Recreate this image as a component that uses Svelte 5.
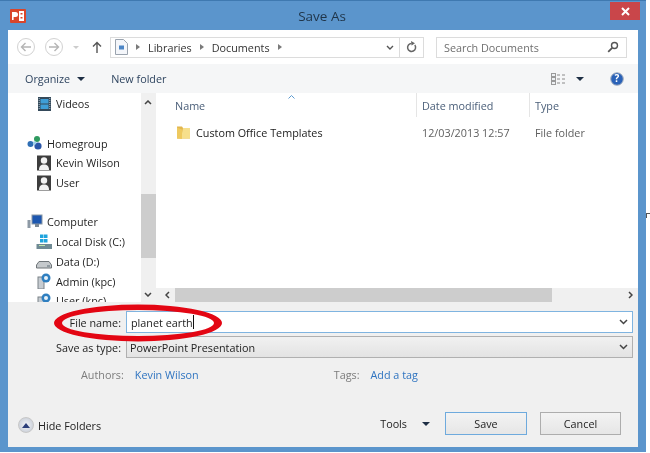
<script>
  const nav_groups = [
    { icon: 'video', label: 'Videos', child: true },
    { gap: true },
    { icon: 'homegroup', label: 'Homegroup' },
    { icon: 'user', label: 'Kevin Wilson', child: true },
    { icon: 'user', label: 'User', child: true },
    { gap: true },
    { icon: 'computer', label: 'Computer' },
    { icon: 'localdisk', label: 'Local Disk (C:)', child: true },
    { icon: 'disk', label: 'Data (D:)', child: true },
    { icon: 'netdrive', label: 'Admin (kpc)', child: true },
    { icon: 'netdrive', label: 'User (kpc)', child: true }
  ]
</script>

<div class="page">
  <div class="window">
    <div class="titlebar">
      <svg class="app-icon" width="16" height="14" viewBox="0 0 16 14">
        <rect width="16" height="14" rx="1" fill="#d9452a" />
        <rect x="9" y="2" width="5" height="10" fill="#fff" />
        <rect x="10.5" y="4" width="2" height="1.5" fill="#d9452a" />
        <rect x="10.5" y="8" width="2" height="1.5" fill="#d9452a" />
        <path d="M2 11V3h3.5a2 2 0 0 1 0 5H3.6v3z" fill="#fff" />
      </svg>
      <span class="title">Save As</span>
      <button class="close">
        <svg width="9" height="9" viewBox="0 0 9 9"><path d="M1 1l7 7M8 1L1 8" stroke="#fff" stroke-width="2" /></svg>
      </button>
    </div>

    <div class="client">
      <div class="navbar">
        <span class="round">
          <svg width="12" height="10" viewBox="0 0 12 10"><path d="M11 5H2M5.5 1L1.500 5l4 4" fill="none" stroke="#b5b5b5" stroke-width="1.400" /></svg>
        </span>
        <span class="round">
          <svg width="12" height="10" viewBox="0 0 12 10"><path d="M1 5h9M6.500 1l4 4-4 4" fill="none" stroke="#b5b5b5" stroke-width="1.400" /></svg>
        </span>
        <span class="tri-down light"></span>
        <svg class="up" width="10" height="12" viewBox="0 0 10 12"><path d="M5 12V2M1 5.500L5 1.500l4 4" fill="none" stroke="#555" stroke-width="1.400" /></svg>
        <div class="address">
          <svg class="lib" width="13" height="16" viewBox="0 0 13 16">
            <path d="M.5.5h8l4 4v11H.5z" fill="#f4f6fa" stroke="#9aa3ae" />
            <rect x="4" y="6.500" width="5" height="4" fill="#4d86c6" />
          </svg>
          <span class="tri-right"></span>
          <span class="crumb">Libraries</span>
          <span class="tri-right"></span>
          <span class="crumb">Documents</span>
          <span class="tri-right"></span>
          <span class="address-end">
            <svg class="chev" width="8" height="5" viewBox="0 0 8 5"><path d="M1 1l3 3 3-3" fill="none" stroke="#555" stroke-width="1.400" /></svg>
            <span class="refresh">
              <svg width="11" height="12" viewBox="0 0 11 12"><path d="M8.800 4A4 4 0 1 1 5.500 2.400" fill="none" stroke="#666" stroke-width="1.500" /><path d="M5 0l4 2.200L5.600 4.600z" fill="#666" /></svg>
            </span>
          </span>
        </div>
        <div class="search">
          <span>Search Documents</span>
          <svg width="12" height="12" viewBox="0 0 12 12"><circle cx="7.500" cy="4.500" r="3" fill="none" stroke="#555" stroke-width="1.400" /><path d="M5.200 6.800L1.200 10.800" stroke="#555" stroke-width="1.800" /></svg>
        </div>
      </div>

      <div class="toolbar">
        <span class="tool">Organize</span>
        <span class="tri-down dark"></span>
        <span class="tool new-folder">New folder</span>
        <span class="toolbar-end">
          <svg width="15" height="12" viewBox="0 0 15 12">
            <rect x=".5" y=".5" width="4" height="3" fill="#eef1f4" stroke="#9a9a9a" />
            <rect x=".5" y="4.500" width="4" height="3" fill="#eef1f4" stroke="#9a9a9a" />
            <rect x=".5" y="8.500" width="4" height="3" fill="#eef1f4" stroke="#9a9a9a" />
            <path d="M6 2h3m2 0h3M6 6h3m2 0h3M6 10h3m2 0h3" stroke="#8a8a8a" />
          </svg>
          <span class="tri-down dark views"></span>
          <svg class="help" width="14" height="14" viewBox="0 0 14 14">
            <circle cx="7" cy="7" r="6.300" fill="#2a62b8" stroke="#a9b3c0" />
            <text x="7" y="10.400" text-anchor="middle" class="help-q">?</text>
          </svg>
        </span>
      </div>

      <div class="browser">
        <div class="sidebar">
          <div class="tree">
            {#each nav_groups as item}
              {#if item.gap}
                <div class="tree-gap"></div>
              {:else}
                <div class="tree-row" class:child={item.child}>
                  <svg width="16" height="16" viewBox="0 0 16 16">
                    {#if item.icon === 'video'}
                      <rect x="2" y="1" width="13" height="14" fill="#34495a" />
                      <rect x="4.500" y="3" width="8" height="4.500" fill="#3f9ed8" />
                      <rect x="4.500" y="8.500" width="8" height="4.500" fill="#3f9ed8" />
                      <path d="M3.200 2v12M13.800 2v12" stroke="#a9bac6" stroke-dasharray="1 1" />
                    {:else if item.icon === 'homegroup'}
                      <circle cx="3.500" cy="9" r="3" fill="#2f6fb5" />
                      <circle cx="10" cy="4" r="3" fill="#2f9a5f" />
                      <circle cx="11" cy="11" r="3.600" fill="#2b56a8" />
                      <circle cx="7.600" cy="8" r="1.800" fill="#9fd0ea" />
                    {:else if item.icon === 'user'}
                      <rect x="1" y="0.500" width="14" height="15" fill="#3d3d3d" />
                      <circle cx="8" cy="5.500" r="3.200" fill="#f2f2f2" />
                      <path d="M3 15c0-4 2-5.500 5-5.500s5 1.500 5 5.500z" fill="#f2f2f2" />
                    {:else if item.icon === 'computer'}
                      <rect x="5" y="1" width="10" height="9" fill="#1d57b0" stroke="#8a98a5" />
                      <rect x="8" y="10" width="4" height="3" fill="#7c8894" />
                      <rect x="0.500" y="6" width="3" height="8" fill="#8d99a5" />
                    {:else if item.icon === 'localdisk'}
                      <rect x="0.500" y="10" width="15.500" height="5" fill="#6f8a94" />
                      <path d="M3 11.500h6" stroke="#bfe4a8" />
                      <rect x="4" y="0.500" width="3.500" height="3.500" fill="#1fa4dd" />
                      <rect x="8" y="0.500" width="3.500" height="3.500" fill="#1fa4dd" />
                      <rect x="4" y="5" width="3.500" height="3.500" fill="#1fa4dd" />
                      <rect x="8" y="5" width="3.500" height="3.500" fill="#1fa4dd" />
                    {:else if item.icon === 'disk'}
                      <path d="M.5 12l2.500-3.500h10l2.500 3.500v3H.5z" fill="#c5c9cc" stroke="#6f7579" />
                      <path d="M11 13h3" stroke="#5b6b75" />
                    {:else}
                      <rect x="2" y="4" width="6" height="12" fill="#c7ccd1" stroke="#7b8288" />
                      <circle cx="10" cy="5" r="4.500" fill="#2f7fc0" />
                      <circle cx="10" cy="5" r="2" fill="#e9f2f8" />
                    {/if}
                  </svg>
                  <span>{item.label}</span>
                </div>
              {/if}
            {/each}
          </div>
        </div>
        <div class="vscroll">
          <svg class="arrow-top" width="8" height="5" viewBox="0 0 8 5"><path d="M1 4l3-3 3 3" fill="none" stroke="#444" stroke-width="1.500" /></svg>
          <div class="vthumb"></div>
          <svg class="arrow-bottom" width="8" height="5" viewBox="0 0 8 5"><path d="M1 1l3 3 3-3" fill="none" stroke="#444" stroke-width="1.500" /></svg>
        </div>

        <div class="files">
          <div class="file-list">
            <div class="file-head">
              <span class="col-name">Name</span>
              <span class="col-date">Date modified</span>
              <span class="col-type">Type</span>
              <svg class="sort" width="7" height="4" viewBox="0 0 7 4"><path d="M.5 3.500L3.500.5l3 3" fill="none" stroke="#5d9bd0" /></svg>
            </div>
            <div class="file-row">
              <span class="col-name">
                <svg width="15" height="15" viewBox="0 0 15 15">
                  <path d="M1 1.500h5l1 1.500h7v10.500H1z" fill="#e2b64e" />
                  <path d="M7 3h7v10.500H5z" fill="#f6df8c" />
                  <path d="M1 2.500l5 2v9.500l-5-.5z" fill="#eec95f" />
                </svg>
                Custom Office Templates
              </span>
              <span class="col-date">12/03/2013 12:57</span>
              <span class="col-type">File folder</span>
            </div>
          </div>
          <div class="hscroll">
            <svg width="5" height="8" viewBox="0 0 5 8"><path d="M4 1L1 4l3 3" fill="none" stroke="#444" stroke-width="1.500" /></svg>
            <div class="hthumb"></div>
            <svg width="5" height="8" viewBox="0 0 5 8"><path d="M1 1l3 3-3 3" fill="none" stroke="#444" stroke-width="1.500" /></svg>
          </div>
        </div>
      </div>

      <div class="form">
        <div class="field">
          <label for="file-name">File name:</label>
          <div class="combo active">
            <span id="file-name" class="value">planet earth<i class="caret"></i></span>
            <svg width="9" height="6" viewBox="0 0 9 6"><path d="M1 1l3.500 3.500L8 1" fill="none" stroke="#444" stroke-width="1.500" /></svg>
          </div>
        </div>
        <div class="field second">
          <label for="save-type">Save as type:</label>
          <div class="combo grey">
            <span id="save-type" class="value">PowerPoint Presentation</span>
            <svg width="9" height="6" viewBox="0 0 9 6"><path d="M1 1l3.500 3.500L8 1" fill="none" stroke="#444" stroke-width="1.500" /></svg>
          </div>
        </div>
        <div class="meta">
          <span class="meta-label">Authors:</span>
          <span class="link">Kevin Wilson</span>
          <span class="meta-label tags">Tags:</span>
          <span class="link">Add a tag</span>
        </div>
        <div class="actions">
          <div class="hide">
            <span class="hide-icon">
              <svg width="8" height="5" viewBox="0 0 8 5"><path d="M4 0l4 5H0z" fill="#2c3f7a" /></svg>
            </span>
            <span class="hide-label">Hide Folders</span>
          </div>
          <span class="tools">Tools</span>
          <span class="tri-down dark tools-arrow"></span>
          <button class="btn primary">Save</button>
          <button class="btn">Cancel</button>
        </div>
      </div>
    </div>

    <svg class="oval" width="176" height="42" viewBox="0 0 176 42">
      <path
        fill="#e30613"
        fill-rule="evenodd"
        d="M4 21a84 18.500 0 1 0 168 0a84 18.500 0 1 0-168 0zM12 21a76 13 0 1 0 152 0a76 13 0 1 0-152 0z"
      />
    </svg>
  </div>
  <span class="stray"></span>
</div>

<style>
  :global(body) {
    background: #fff;
  }

  .page {
    position: relative;
    width: 650px;
    height: 453px;
    overflow: hidden;
    background: #fff;
    font-family: "Open Sans", "Noto Sans", sans-serif;
    font-size: 10.8px;
    color: #2b2b2b;
  }

  .window {
    position: relative;
    width: 646px;
    height: 452px;
    box-sizing: border-box;
    display: flex;
    flex-direction: column;
    background: #5b95cc;
    border-top: 1px solid #3f79b0;
    padding: 0 8px 5px 8px;
    filter: blur(0.35px);
  }

  /* off-window scrap at the screenshot's right edge */
  .stray {
    position: absolute;
    left: 646px;
    top: 213px;
    width: 4px;
    height: 4px;
    border-top: 1px solid #555;
    border-left: 1px solid #555;
  }

  .titlebar {
    position: relative;
    height: 29px;
    flex-shrink: 0;
    display: flex;
    align-items: center;
    justify-content: center;
  }

  .app-icon {
    position: absolute;
    left: 2px;
    top: 8px;
  }

  .title {
    font-size: 13.5px;
    color: #1f3448;
    margin-left: -2px;
  }

  .close {
    position: absolute;
    right: -2px;
    top: 1px;
    width: 30px;
    height: 18px;
    border: 0;
    padding: 0;
    background: #c9464a;
    display: flex;
    align-items: center;
    justify-content: center;
  }

  .client {
    flex: 1;
    display: flex;
    flex-direction: column;
    background: #f0f0f0;
    min-height: 0;
  }

  .navbar {
    height: 34px;
    flex-shrink: 0;
    box-sizing: border-box;
    background: #fff;
    display: flex;
    align-items: center;
    padding: 0 11px 0 9px;
  }

  .round {
    width: 16px;
    height: 16px;
    border: 1px solid #d2d2d2;
    border-radius: 50%;
    display: flex;
    align-items: center;
    justify-content: center;
    margin-right: 10px;
  }

  .tri-down {
    width: 0;
    height: 0;
    border-left: 3px solid transparent;
    border-right: 3px solid transparent;
    border-top: 3px solid #444;
  }

  .tri-down.light {
    border-top-color: #ccc;
  }

  .tri-down.dark {
    border-top-color: #1e2f45;
    border-left-width: 4px;
    border-right-width: 4px;
    border-top-width: 4px;
  }

  .up {
    margin-left: 13px;
    margin-right: 8px;
  }

  .address {
    width: 314px;
    height: 21px;
    box-sizing: border-box;
    border: 1px solid #dcdcdc;
    display: flex;
    align-items: center;
    padding-left: 4px;
  }

  .tri-right {
    width: 0;
    height: 0;
    border-top: 3px solid transparent;
    border-bottom: 3px solid transparent;
    border-left: 4px solid #7a7a7a;
    margin: 0 8px 0 8px;
  }

  .crumb {
    color: #333;
  }

  .address-end {
    margin-left: auto;
    display: flex;
    align-items: center;
    height: 100%;
  }

  .chev {
    margin-right: 5px;
  }

  .refresh {
    width: 23px;
    height: 100%;
    border-left: 1px solid #dcdcdc;
    display: flex;
    align-items: center;
    justify-content: center;
  }

  .search {
    width: 191px;
    height: 21px;
    box-sizing: border-box;
    margin-left: 12px;
    border: 1px solid #dcdcdc;
    display: flex;
    align-items: center;
    justify-content: space-between;
    padding: 0 7px 0 7px;
    color: #6f6f6f;
  }

  .toolbar {
    height: 29px;
    flex-shrink: 0;
    background: #f5f6f7;
    display: flex;
    align-items: center;
    padding: 0 14px 0 17px;
    color: #2f4560;
  }

  .tool {
    margin-right: 7px;
  }

  .new-folder {
    margin-left: 26px;
  }

  .toolbar-end {
    margin-left: auto;
    display: flex;
    align-items: center;
  }

  .views {
    margin-left: 10px;
  }

  .help {
    margin-left: 26px;
  }

  .help-q {
    font-size: 10px;
    font-weight: 700;
    fill: #fff;
  }

  .browser {
    height: 209px;
    flex-shrink: 0;
    display: flex;
    background: #fff;
  }

  .sidebar {
    width: 133px;
    overflow: hidden;
  }

  .tree {
    padding-top: 1px;
  }

  .tree-row {
    height: 19.7px;
    display: flex;
    align-items: center;
    gap: 4px;
    padding-left: 19px;
    color: #1f1f1f;
    white-space: nowrap;
  }

  .tree-row.child {
    padding-left: 28px;
  }

  .tree-gap {
    height: 19.7px;
  }

  .vscroll {
    width: 15px;
    position: relative;
    background: #f0f0f0;
  }

  .arrow-top,
  .arrow-bottom {
    position: absolute;
    left: 3px;
  }

  .arrow-top {
    top: 7px;
  }

  .arrow-bottom {
    bottom: 5px;
  }

  .vthumb {
    position: absolute;
    top: 101px;
    left: 0;
    width: 100%;
    height: 64px;
    background: #cdcdcd;
  }

  .files {
    flex: 1;
    display: flex;
    flex-direction: column;
    min-width: 0;
  }

  .file-list {
    flex: 1;
  }

  .file-head {
    position: relative;
    height: 24px;
    display: flex;
    align-items: center;
    color: #4c607a;
  }

  .sort {
    position: absolute;
    left: 132px;
    top: 2px;
  }

  .col-name {
    width: 260px;
    padding-left: 19px;
    box-sizing: border-box;
    display: flex;
    align-items: center;
    gap: 5px;
  }

  .col-date {
    width: 113px;
    padding-left: 5px;
    box-sizing: border-box;
    height: 100%;
    display: flex;
    align-items: center;
  }

  .col-type {
    padding-left: 5px;
    height: 100%;
    display: flex;
    align-items: center;
  }

  .file-head .col-date,
  .file-head .col-type {
    border-left: 1px solid #e5e5e5;
  }

  .file-row {
    height: 24px;
    margin-top: 3px;
    display: flex;
    align-items: center;
    color: #5f5f5f;
  }

  .file-row .col-name {
    color: #222;
    padding-left: 20px;
  }

  .file-row .col-date,
  .file-row .col-type {
    padding-left: 6px;
  }

  .hscroll {
    height: 14px;
    background: #f0f0f0;
    display: flex;
    align-items: center;
    padding: 0 5px 0 9px;
  }

  .hthumb {
    width: 377px;
    height: 100%;
    margin-left: 5px;
    margin-right: auto;
    background: #cdcdcd;
  }

  .form {
    flex: 1;
    display: flex;
    flex-direction: column;
    padding-top: 9px;
  }

  .field {
    display: flex;
    align-items: center;
    height: 22px;
  }

  .field.second {
    margin-top: 3px;
  }

  .field label {
    width: 118px;
    padding-right: 5px;
    box-sizing: border-box;
    text-align: right;
    color: #222;
  }

  .combo {
    width: 507px;
    height: 22px;
    box-sizing: border-box;
    display: flex;
    align-items: center;
    justify-content: space-between;
    padding: 0 4px 0 3px;
  }

  .combo.active {
    background: #fff;
    border: 1px solid #7fb4e0;
    padding-left: 4px;
  }

  .combo.grey {
    background: linear-gradient(#f1f1f1, #e3e3e3);
    border: 1px solid #b0b0b0;
  }

  .value {
    color: #222;
    display: flex;
    align-items: center;
  }

  .caret {
    width: 1px;
    height: 14px;
    background: #111;
  }

  .meta {
    display: flex;
    align-items: center;
    height: 20px;
    margin-top: 6px;
    padding-left: 73px;
  }

  .meta-label {
    color: #7c7c7c;
    margin-right: 11px;
  }

  .tags {
    margin-left: 135px;
  }

  .link {
    color: #2f74c0;
  }

  .actions {
    margin-top: auto;
    margin-bottom: 12px;
    display: flex;
    align-items: center;
    height: 23px;
    padding-left: 10px;
  }

  .hide {
    display: flex;
    align-items: center;
    margin-top: 3px;
  }

  .hide-icon {
    width: 14px;
    height: 14px;
    border-radius: 50%;
    background: radial-gradient(#f4f6fa, #bfc5cf);
    border: 1px solid #c8c8c8;
    display: flex;
    align-items: center;
    justify-content: center;
  }

  .hide-label {
    margin-left: 4px;
    color: #222;
  }

  .tools {
    margin-left: auto;
    color: #222;
  }

  .tools-arrow {
    margin: 0 15px 0 15px;
  }

  .btn {
    width: 81px;
    height: 23px;
    box-sizing: border-box;
    padding: 0;
    font: inherit;
    color: #222;
    background: linear-gradient(#f3f3f3, #e6e6e6);
    border: 1px solid #adadad;
    margin-right: 17px;
  }

  .btn.primary {
    width: 82px;
    border: 1px solid #6eaadd;
    margin-right: 13px;
  }

  .oval {
    position: absolute;
    left: 50px;
    top: 301px;
  }
</style>
